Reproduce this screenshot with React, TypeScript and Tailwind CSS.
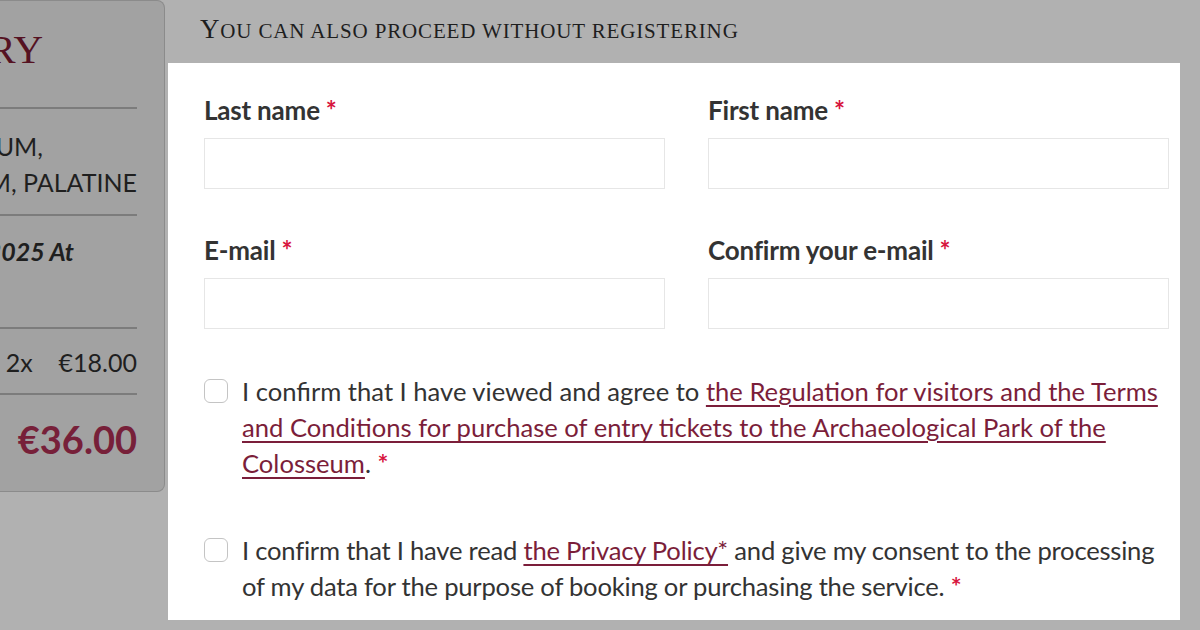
import React from 'react'

const lato = { fontFamily: 'Lato, "Open Sans", sans-serif' }
const serif = { fontFamily: '"Liberation Serif", "DejaVu Serif", serif' }

function Req() {
  return <span className="text-[#d7143d] font-bold ml-[6px]">*</span>
}

function Field({ label }: { label: string }) {
  return (
    <div className="flex flex-col">
      <label className="text-[26px] leading-[30px] font-bold text-[#333] tracking-[-0.2px] whitespace-nowrap">
        {label}
        <Req />
      </label>
      <input type="text" className="mt-[13px] h-[51px] w-full border border-[#e6e6e6] bg-white outline-none" />
    </div>
  )
}

function Check({ children, tight = false }: { children: React.ReactNode; tight?: boolean }) {
  return (
    <div className="flex items-start">
      <span className="mt-[6px] w-[24px] h-[24px] shrink-0 rounded-[6px] border border-[#c4c4c4] bg-white" />
      <p className={tight ? 'ml-[14px] text-[25.6px] leading-[36px] text-[#333] tracking-[-0.22px]' : 'ml-[14px] text-[25.6px] leading-[36px] text-[#333]'}>
        {children}
      </p>
    </div>
  )
}

// a line that keeps its right end and loses its start to the card's left edge
function Line({ children, className = '' }: { children: React.ReactNode; className?: string }) {
  return <div className={`flex justify-end whitespace-nowrap ${className}`}>{children}</div>
}

export default function App() {
  return (
    <div className="w-[1200px] h-[630px] overflow-hidden bg-[#b1b1b1] flex gap-[3px]" style={lato}>
      {/* summary card, dimmed under overlay */}
      <div className="w-[165px] h-[492px] shrink-0 overflow-hidden bg-[#a2a2a2] border border-l-0 border-[#8b8b8b] rounded-r-[8px] pr-[27px] flex flex-col text-[#1f1f1f]">
        <div className="h-[106px] pt-[24px]">
          <Line className="pr-[94px] leading-[48px] text-[41px] text-[#551222]">
            <span style={serif}>SUMMARY</span>
          </Line>
        </div>
        <div className="h-[2px] bg-[#7c7c7c] shrink-0" />
        <div className="pt-[19px] pb-[14px] text-[25px] leading-[36px]">
          <Line className="pr-[94px]">COLOSSEUM,</Line>
          <Line>ROMAN FORUM, PALATINE</Line>
        </div>
        <div className="h-[2px] bg-[#7c7c7c] shrink-0" />
        <div className="pt-[17px] pb-[58px] text-[25px] leading-[36px] font-bold italic">
          <Line className="pr-[63px]">12/06/2025 At</Line>
        </div>
        <div className="h-[2px] bg-[#7c7c7c] shrink-0" />
        <div className="pt-[15px] pb-[13px] text-[25px] leading-[36px]">
          <Line className="gap-[26px]">
            <span>Full ticket</span>
            <span>2x</span>
            <span>€18.00</span>
          </Line>
        </div>
        <div className="h-[2px] bg-[#7c7c7c] shrink-0" />
        <div className="pt-[20px] text-[38px] leading-[48px] font-bold text-[#772039]">
          <Line>€36.00</Line>
        </div>
      </div>

      <div className="flex flex-col w-[1012px] shrink-0">
        <div className="h-[63px] flex items-center pl-[32px] pb-[4px]">
          <h2 className="text-[#1e1e1e] whitespace-nowrap uppercase tracking-[0.85px] leading-none" style={serif}>
            <span className="text-[27px]">Y</span>
            <span className="text-[21px]">ou can also proceed without registering</span>
          </h2>
        </div>

        <div className="h-[557px] bg-white pl-[36px] pr-[11px] pt-[32px]">
          <div className="grid grid-cols-[461px_461px] gap-x-[43px] gap-y-[46px]">
            <Field label="Last name" />
            <Field label="First name" />
            <Field label="E-mail" />
            <Field label="Confirm your e-mail" />
          </div>

          <div className="mt-[44px] flex flex-col gap-[51px]">
            <Check>
              I confirm that I have viewed and agree to{' '}
              <a href="#" className="text-[#7b1e3a] underline underline-offset-[4px]">
                the Regulation for visitors and the Terms and Conditions for purchase of entry tickets to the Archaeological Park of the Colosseum
              </a>
              . <span className="text-[#d7143d] font-bold">*</span>
            </Check>
            <Check tight>
              I confirm that I have read{' '}
              <a href="#" className="text-[#7b1e3a] underline underline-offset-[4px]">
                the Privacy Policy*
              </a>{' '}
              and give my consent to the processing of my data for the purpose of booking or purchasing the service.{' '}
              <span className="text-[#d7143d] font-bold">*</span>
            </Check>
          </div>
        </div>
      </div>
    </div>
  )
}
